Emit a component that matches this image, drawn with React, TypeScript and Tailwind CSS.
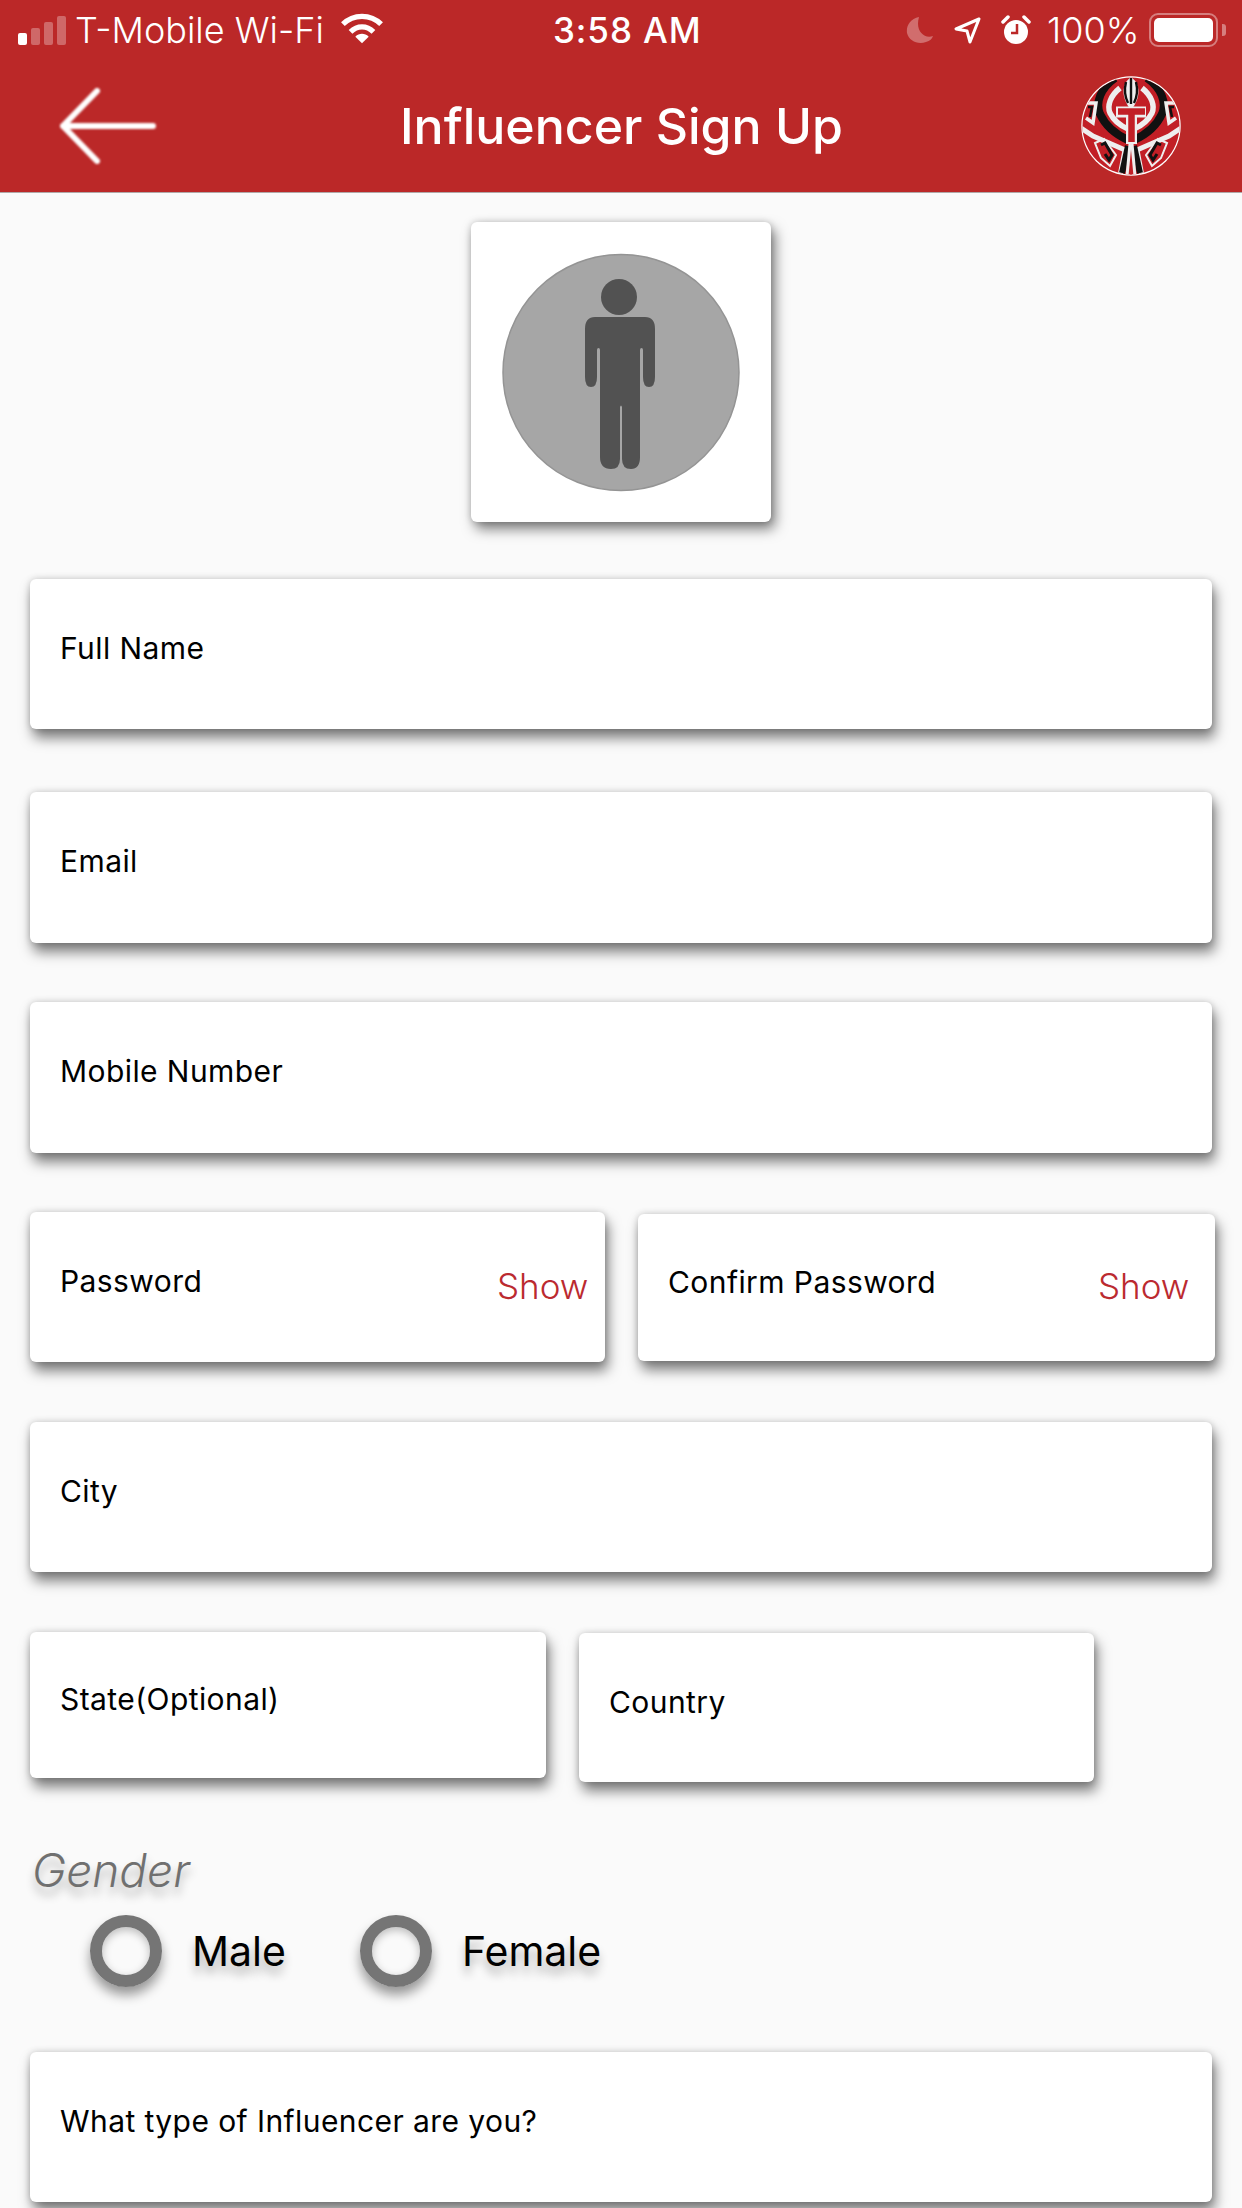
const Card = ({ className, label, show, showClass, labelClass }: { className: string; label: string; show?: boolean; showClass?: string; labelClass?: string }) => (
  <div className={`relative rounded-[6px] bg-white shadow-[3px_9px_13px_rgba(0,0,0,0.5),0_0_7px_rgba(0,0,0,0.18)] ${className}`}>
    <div className={`pl-[30px] text-[30px] leading-[40px] tracking-[0.42px] text-black ${labelClass ?? "pt-[49px]"}`}>{label}</div>
    {show && <span className={`absolute text-[35px] leading-[40px] font-light text-[#bb2a30] ${showClass ?? ""}`}>Show</span>}
  </div>
);

const Radio = ({ label, gap }: { label: string; gap: string }) => (
  <div className={`flex items-center ${gap}`}>
    <div className="h-[72px] w-[72px] rounded-full border-[12px] border-[#757575] shadow-[0_8px_12px_rgba(0,0,0,0.4),inset_0_3px_8px_rgba(0,0,0,0.25)]" />
    <span className="ml-[30px] text-[41px] leading-[48px] text-black [text-shadow:0_8px_10px_rgba(0,0,0,0.3)]">{label}</span>
  </div>
);

const Logo = () => (
  <svg viewBox="0 0 100 100" className="h-[100px] w-[100px]">
    <defs>
      <clipPath id="c"><circle cx="50" cy="50" r="48.5" /></clipPath>
    </defs>
    <circle cx="50" cy="50" r="49.7" fill="#fff" />
    <g clipPath="url(#c)">
      <rect width="100" height="100" fill="#c21f26" />
      <g fill="none">
        {[0, 1].map((m) => (
          <g key={m} transform={m ? "matrix(-1 0 0 1 100 0)" : undefined}>
            <path d="M34 2 C20 12 14 26 19 38 C25 51 36 59 47 64" stroke="#111" strokeWidth="8" />
            <path d="M39 12 C29 20 26 30 29 37 C33 45 40 50 47 53" stroke="#eee" strokeWidth="5.5" />
            <path d="M6 27 L15 27 L12 47 L5 42" stroke="#eee" strokeWidth="3.5" />
            <path d="M7 31 L11 31 L9 41" stroke="#111" strokeWidth="2.5" />
            <path d="M0 52 L12 60 L44 74 L39 100" stroke="#eee" strokeWidth="5" />
            <path d="M14 67 L23 63 L35 79 L29 90 L20 82 Z" stroke="#eee" strokeWidth="2" />
            <path d="M20 69 L24 67 L31 79 L28 84 L24 78" stroke="#111" strokeWidth="3" />
            <path d="M47 70 L41 97" stroke="#111" strokeWidth="6" />
            <path d="M49 68 L46 100" stroke="#eee" strokeWidth="3" />
          </g>
        ))}
        <path d="M50 1 C40 8 40 22 50 34 C60 22 60 8 50 1 Z" fill="#eee" />
        <path d="M50 2 V28 M45 6 C43 14 44 21 47 27 M55 6 C57 14 56 21 53 27" stroke="#111" strokeWidth="2.4" />
        <path d="M35 36 H65 M50.5 36 V68" stroke="#eee" strokeWidth="11" />
        <path d="M37 35.5 H64 M50.5 36 V66" stroke="#c21f26" strokeWidth="6.5" />
        <path d="M50 84 V100" stroke="#c21f26" strokeWidth="2" />
      </g>
    </g>
  </svg>
);

export default function App() {
  return (
    <div className="h-[2208px] w-[1242px] overflow-hidden bg-[#fafafa] font-['Inter',sans-serif]">
      <header className="h-[193px] border-b border-[#b0a8a8] bg-[#bb2828] text-white">
        <div className="flex h-[60px] items-center">
          <div className="flex w-[553px] items-center pl-[18px]">
            <div className="flex h-[30px] w-[48px] items-end gap-[4px]">
              <span className="h-[12px] w-[9px] rounded-[2px] bg-white" />
              <span className="h-[17px] w-[9px] rounded-[2px] bg-white/30" />
              <span className="h-[23px] w-[9px] rounded-[2px] bg-white/30" />
              <span className="h-[29px] w-[9px] rounded-[2px] bg-white/30" />
            </div>
            <span className="ml-[-3px] pl-[12px] text-[36px] leading-[40px] font-light">T-Mobile Wi-Fi</span>
            <svg viewBox="0 0 44 32" className="ml-[17px] mt-[-2px] h-[32px] w-[42px]">
              <path d="M2 11 C13 0 31 0 42 11" fill="none" stroke="#fff" strokeWidth="5.5" />
              <path d="M10 19 C17 12 27 12 34 19" fill="none" stroke="#fff" strokeWidth="5.5" />
              <path d="M22 31 L15 24 C19 20 25 20 29 24 Z" fill="#fff" />
            </svg>
          </div>
          <span className="w-[353px] text-[35px] leading-[40px] font-medium tracking-[0.9px]">3:58 AM</span>
          <div className="flex items-center">
            <svg viewBox="0 0 28 28" className="h-[28px] w-[28px]">
              <path d="M13 1 C4 3 0 10 1 17 C3 25 12 29 20 26 C24 25 26 23 27 20 C18 23 9 15 13 1 Z" fill="#fff" fillOpacity="0.32" />
            </svg>
            <svg viewBox="0 0 28 28" className="ml-[19px] h-[28px] w-[28px]">
              <path d="M26 3 L3 13 L14 15 L17 26 Z" fill="none" stroke="#fff" strokeWidth="3" strokeLinejoin="round" />
            </svg>
            <svg viewBox="0 0 30 30" className="ml-[20px] h-[30px] w-[30px]">
              <circle cx="15" cy="17" r="12" fill="#fff" />
              <path d="M2 7 L7 2 M28 7 L23 2" stroke="#fff" strokeWidth="3.5" strokeLinecap="round" />
              <path d="M16 9 V18 H10" fill="none" stroke="#bb2828" strokeWidth="2.5" />
            </svg>
            <span className="ml-[16px] text-[36px] leading-[40px] font-light">100%</span>
            <div className="ml-[10px] h-[34px] w-[69px] rounded-[9px] border-[2.5px] border-white/40 p-[3px]">
              <div className="h-full w-full rounded-[5px] bg-white" />
            </div>
            <div className="ml-[4px] h-[12px] w-[4px] rounded-r-[3px] bg-white/40" />
          </div>
        </div>
        <div className="flex h-[132px] items-center pl-[59px]">
          <svg viewBox="0 0 97 76" className="h-[76px] w-[97px] blur-[0.8px]">
            <path d="M94 38 H4 M38 3 L4 38 L38 73" fill="none" stroke="#fff" strokeWidth="6" strokeLinecap="round" strokeLinejoin="round" />
          </svg>
          <h1 className="ml-[244px] w-[681px] text-[50px] leading-[56px] font-medium">Influencer Sign Up</h1>
          <Logo />
        </div>
      </header>

      <main className="flex flex-col items-start px-[30px]">
        <div className="mt-[29px] ml-[441px] flex h-[300px] w-[300px] items-center justify-center rounded-[6px] bg-white shadow-[4px_7px_13px_rgba(0,0,0,0.5),0_0_7px_rgba(0,0,0,0.18)]">
          <svg viewBox="0 0 238 239" className="h-[239px] w-[238px]">
            <circle cx="119" cy="119.5" r="118" fill="#a6a6a6" stroke="#949494" strokeWidth="1.5" />
            <circle cx="117" cy="44" r="18" fill="#525252" />
            <path d="M93 64 H143 Q153 64 153 76 V124 Q153 134 147 134 Q141 134 141 124 V97 Q141 95 139.5 95 Q138 95 138 97 V204 Q138 216 129 216 Q120 216 120 206 V154 Q119 151 118 154 V206 Q118 216 109 216 Q98 216 98 204 V97 Q98 95 96.5 95 Q95 95 95 97 V124 Q95 134 89 134 Q83 134 83 124 V76 Q83 64 93 64 Z" fill="#525252" />
          </svg>
        </div>
        <Card className="mt-[57px] h-[150px] w-[1182px]" label="Full Name" />
        <Card className="mt-[63px] h-[151px] w-[1182px]" label="Email" />
        <Card className="mt-[59px] h-[151px] w-[1182px]" label="Mobile Number" />
        <div className="mt-[59px] flex items-start">
          <Card className="h-[150px] w-[575px]" label="Password" show showClass="left-[467px] top-[54px]" />
          <Card className="mt-[2px] ml-[33px] h-[147px] w-[577px]" label="Confirm Password" labelClass="pt-[48px]" show showClass="left-[460px] top-[52px]" />
        </div>
        <Card className="mt-[60px] h-[150px] w-[1182px]" label="City" />
        <div className="mt-[60px] flex items-start">
          <Card className="h-[146px] w-[516px]" label="State(Optional)" labelClass="pt-[47px]" />
          <Card className="mt-[1px] ml-[33px] h-[149px] w-[515px]" label="Country" />
        </div>
        <div className="mt-[60px] ml-[2px] text-[46px] leading-[56px] font-light italic text-[#707070] [text-shadow:0_8px_10px_rgba(0,0,0,0.3)]">Gender</div>
        <div className="mt-[17px] ml-[60px] flex items-center">
          <Radio label="Male" gap="" />
          <Radio label="Female" gap="ml-[74px]" />
        </div>
        <Card className="mt-[65px] h-[150px] w-[1182px]" label="What type of Influencer are you?" />
      </main>
    </div>
  );
}
